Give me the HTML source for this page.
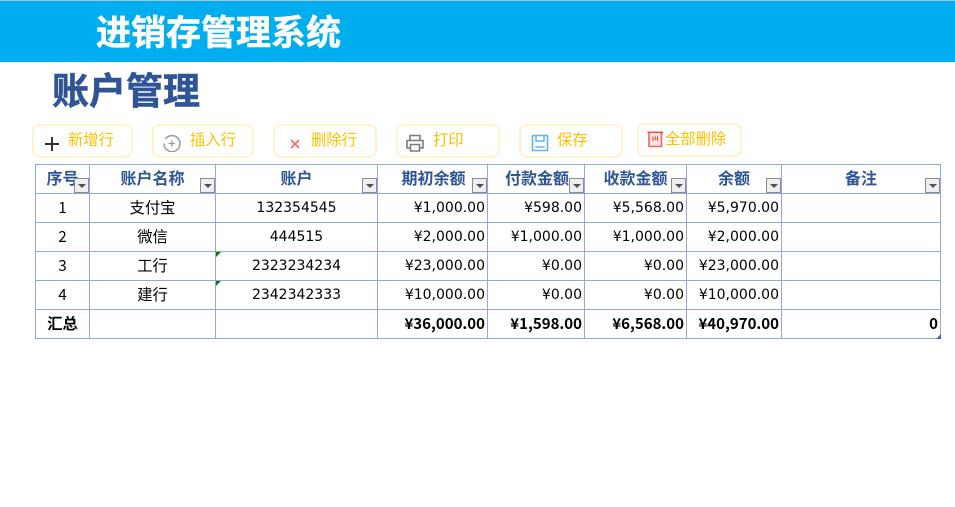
<!DOCTYPE html>
<html><head><meta charset="utf-8"><style>
html,body{margin:0;padding:0;width:955px;height:507px;overflow:hidden;background:#fff}
body{position:relative;font-family:"Liberation Sans","Noto Sans CJK SC",sans-serif}
div,svg{position:absolute}
.h{left:0;top:0;width:955px;height:62px;background:#00AEEF;border-top:1px solid #a9c4cf;box-sizing:border-box}
.t1{left:96px;top:8px;font:bold 35px/46px "Noto Sans CJK SC",sans-serif;color:#fff;white-space:nowrap;-webkit-text-stroke:.5px #fff}
.t2{left:52px;top:64px;font:bold 37px/48px "Noto Sans CJK SC",sans-serif;color:#2F5597;white-space:nowrap;-webkit-text-stroke:.6px #2F5597}
.b{box-sizing:border-box;border:2px solid #FFF2CC;border-radius:8px;background:#fff}
.bt{font:15.3px/20px "Noto Sans CJK SC",sans-serif;color:#FFC000;white-space:nowrap}
.v{width:1px;top:164px;height:175px;background:#8EA9DB}
.l{height:1px;left:35px;width:906px;background:#8EA9DB}
.c{font:15.3px/20px "Noto Sans CJK SC",sans-serif;color:#000;text-align:center;white-space:nowrap}
.n{font:14px/20px "DejaVu Sans",sans-serif;color:#000;text-align:right;white-space:nowrap}
.s{font:bold 15px/20px "Noto Sans CJK SC",sans-serif;color:#000;text-align:right;white-space:nowrap}
.th{font:bold 16px/20px "Noto Sans CJK SC",sans-serif;color:#2F5597;text-align:center;white-space:nowrap;top:167px}
.f{width:15px;height:15px;top:178px;box-sizing:border-box;background:#eeeef0;border:1px solid #8c8c94}
.f:after{content:"";position:absolute;left:3px;top:5px;border-left:4px solid transparent;border-right:4px solid transparent;border-top:4px solid #50505a}
.g{width:0;height:0;border-top:5px solid #0a7a0a;border-right:5px solid transparent}
</style></head><body>
<div class="h"></div>
<div class="t1">进销存管理系统</div>
<div class="t2">账户管理</div>

<div class="b" style="left:32px;top:124px;width:101px;height:34px"></div>
<div class="b" style="left:152px;top:124px;width:102px;height:34px"></div>
<div class="b" style="left:273px;top:124px;width:104px;height:34px"></div>
<div class="b" style="left:396px;top:124px;width:104px;height:34px"></div>
<div class="b" style="left:519px;top:124px;width:104px;height:34px"></div>
<div class="b" style="left:637px;top:123px;width:105px;height:34px"></div>

<div class="bt" style="left:68px;top:129px">新增行</div>
<div class="bt" style="left:190px;top:129px">插入行</div>
<div class="bt" style="left:311px;top:129px">删除行</div>
<div class="bt" style="left:433px;top:129px">打印</div>
<div class="bt" style="left:557px;top:129px">保存</div>
<div class="bt" style="left:665px;top:128px">全部删除</div>

<svg style="left:44px;top:136px" width="16" height="16" viewBox="0 0 16 16"><path d="M1 8H15M8 1V15" stroke="#3a3030" stroke-width="2" fill="none"/></svg>
<svg style="left:162px;top:134px" width="20" height="18" viewBox="0 0 20 18"><path d="M3.500 5A8 8 0 1 1 2 9.500" stroke="#999" stroke-width="1.500" fill="none"/><path d="M6.500 9.500H13M9.750 6.500V12.500" stroke="#999" stroke-width="1.300" fill="none"/></svg>
<svg style="left:289px;top:138px" width="12" height="12" viewBox="0 0 12 12"><path d="M2 2L10 10M10 2L2 10" stroke="#EF6B6B" stroke-width="1.600" fill="none"/></svg>
<svg style="left:405px;top:134px" width="20" height="19" viewBox="0 0 20 19"><path d="M5 6V1.500H15V6M5 14H2V6.500H18V14H15" stroke="#7d7d7d" stroke-width="1.600" fill="none"/><path d="M5.500 10.500H14.500V17H5.500Z" stroke="#7d7d7d" stroke-width="1.600" fill="none"/></svg>
<svg style="left:531px;top:134px" width="18" height="18" viewBox="0 0 18 18"><path d="M1.500 1.500H16.500V16.500H1.500Z" stroke="#62B5EA" stroke-width="1.600" fill="none"/><path d="M5 1.500V7H13V1.500M4.500 13H13.500" stroke="#62B5EA" stroke-width="1.500" fill="none"/></svg>
<svg style="left:647px;top:131px" width="17" height="17" viewBox="0 0 17 17"><path d="M0.500 1.500H16" stroke="#E04A3A" stroke-width="1.800" fill="none"/><path d="M2 2V15.500H14.500V2" stroke="#E8685A" stroke-width="1.600" fill="#fbe3df"/><path d="M6 5.500V10M8.250 5.500V9M10.500 5.500V10" stroke="#E04A3A" stroke-width="1.100" fill="none"/></svg>

<div class="l" style="top:164px"></div><div class="l" style="top:193px"></div><div class="l" style="top:222px"></div><div class="l" style="top:251px"></div><div class="l" style="top:280px"></div><div class="l" style="top:309px"></div><div class="l" style="top:338px"></div>
<div class="v" style="left:35px"></div><div class="v" style="left:89px"></div><div class="v" style="left:215px"></div><div class="v" style="left:377px"></div><div class="v" style="left:487px"></div><div class="v" style="left:584px"></div><div class="v" style="left:686px"></div><div class="v" style="left:781px"></div><div class="v" style="left:940px"></div>

<div class="th" style="left:36px;width:53px">序号</div>
<div class="th" style="left:90px;width:125px">账户名称</div>
<div class="th" style="left:216px;width:161px">账户</div>
<div class="th" style="left:379px;width:109px">期初余额</div>
<div class="th" style="left:489px;width:96px">付款金额</div>
<div class="th" style="left:585px;width:101px">收款金额</div>
<div class="th" style="left:687px;width:94px">余额</div>
<div class="th" style="left:782px;width:158px">备注</div>

<div class="f" style="left:74px"></div><div class="f" style="left:200px"></div><div class="f" style="left:362px"></div><div class="f" style="left:472px"></div><div class="f" style="left:569px"></div><div class="f" style="left:671px"></div><div class="f" style="left:766px"></div><div class="f" style="left:925px"></div>

<div class="c" style="left:36px;width:53px;top:197px">1</div><div class="c" style="left:90px;width:125px;top:197px">支付宝</div><div class="n" style="left:216px;width:161px;top:198px;text-align:center">132354545</div>
<div class="c" style="left:36px;width:53px;top:226px">2</div><div class="c" style="left:90px;width:125px;top:226px">微信</div><div class="n" style="left:216px;width:161px;top:227px;text-align:center">444515</div>
<div class="c" style="left:36px;width:53px;top:255px">3</div><div class="c" style="left:90px;width:125px;top:255px">工行</div><div class="n" style="left:216px;width:161px;top:256px;text-align:center">2323234234</div>
<div class="c" style="left:36px;width:53px;top:284px">4</div><div class="c" style="left:90px;width:125px;top:284px">建行</div><div class="n" style="left:216px;width:161px;top:285px;text-align:center">2342342333</div>
<div class="c" style="left:36px;width:53px;top:313px;font-weight:bold">汇总</div>
<div class="g" style="left:216px;top:252px"></div><div class="g" style="left:216px;top:281px"></div>

<div class="n" style="left:378px;width:107px;top:198px">¥1,000.00</div><div class="n" style="left:488px;width:94px;top:198px">¥598.00</div><div class="n" style="left:585px;width:99px;top:198px">¥5,568.00</div><div class="n" style="left:687px;width:92px;top:198px">¥5,970.00</div>
<div class="n" style="left:378px;width:107px;top:227px">¥2,000.00</div><div class="n" style="left:488px;width:94px;top:227px">¥1,000.00</div><div class="n" style="left:585px;width:99px;top:227px">¥1,000.00</div><div class="n" style="left:687px;width:92px;top:227px">¥2,000.00</div>
<div class="n" style="left:378px;width:107px;top:256px">¥23,000.00</div><div class="n" style="left:488px;width:94px;top:256px">¥0.00</div><div class="n" style="left:585px;width:99px;top:256px">¥0.00</div><div class="n" style="left:687px;width:92px;top:256px">¥23,000.00</div>
<div class="n" style="left:378px;width:107px;top:285px">¥10,000.00</div><div class="n" style="left:488px;width:94px;top:285px">¥0.00</div><div class="n" style="left:585px;width:99px;top:285px">¥0.00</div><div class="n" style="left:687px;width:92px;top:285px">¥10,000.00</div>
<div class="s" style="left:378px;width:107px;top:314px">¥36,000.00</div><div class="s" style="left:488px;width:94px;top:314px">¥1,598.00</div><div class="s" style="left:585px;width:99px;top:314px">¥6,568.00</div><div class="s" style="left:687px;width:92px;top:314px">¥40,970.00</div><div class="s" style="left:782px;width:156px;top:314px">0</div>
<div style="left:936px;top:334px;width:5px;height:5px;background:#3f5fc0;clip-path:polygon(100% 0,100% 100%,0 100%)"></div>
</body></html>
